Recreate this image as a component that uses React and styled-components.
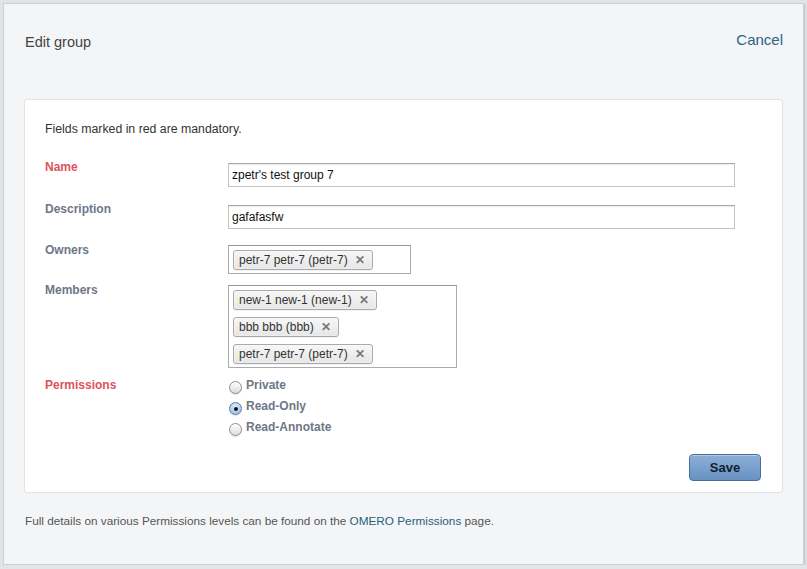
import styled, { createGlobalStyle } from "styled-components";

const GlobalStyle = createGlobalStyle`
    body {
        margin: 0;
        background: #e3e4e7;
        font-family: "Liberation Sans", Arial, sans-serif;
    }
`;

const Panel = styled.div`
    margin: 3px 0 0 3px;
    width: 801px;
    height: 562px;
    box-sizing: border-box;
    background: #f4f5f7;
    border: 1px solid #cfd0d3;
    box-shadow: 1px 1px 2px rgba(0, 0, 0, 0.15);
    padding: 0 20px;
`;

const Header = styled.div`
    display: flex;
    justify-content: space-between;
    align-items: flex-start;
    height: 95px;
    padding-left: 1px;
`;

const Title = styled.h1`
    margin: 29px 0 0;
    font-size: 14.5px;
    font-weight: normal;
    line-height: 18px;
    color: #444;
`;

const Cancel = styled.a`
    margin: 27px 0 0;
    font-size: 15px;
    line-height: 18px;
    color: #2b6584;
    text-decoration: none;
    cursor: pointer;
`;

const Card = styled.div`
    background: #fff;
    border: 1px solid #e1e2e5;
    border-radius: 3px;
    padding: 20px 21px 11px 20px;
    display: flex;
    flex-direction: column;
`;

const Note = styled.p`
    margin: 0;
    font-size: 12.3px;
    line-height: 18px;
    color: #333;
`;

const Row = styled.div`
    display: flex;
    align-items: flex-start;
    margin-top: ${(p) => p.$gap}px;
`;

const Label = styled.label`
    width: 183px;
    flex: none;
    font-size: 12px;
    font-weight: bold;
    line-height: 18px;
    color: ${(p) => (p.$required ? "#e0525c" : "#6e7787")};
`;

const TextInput = styled.input`
    margin-top: 5px;
    width: ${(p) => p.$width}px;
    height: 24px;
    box-sizing: border-box;
    border: 1px solid #c4c4c4;
    border-top-color: #a9a9a9;
    box-shadow: inset 0 1px 1px rgba(0, 0, 0, 0.08);
    padding: 0 3px;
    font-family: "Liberation Sans", Arial, sans-serif;
    font-size: 12px;
    color: #111;
    outline: none;
`;

const TagBox = styled.div`
    margin-top: 4px;
    width: ${(p) => p.$width}px;
    box-sizing: border-box;
    border: 1px solid #aaa;
    border-top-color: #999;
    background: #fff;
    padding: 4px 4px 3px;
    display: flex;
    flex-wrap: wrap;
    align-content: flex-start;
    gap: 7px 4px;
`;

const Tag = styled.span`
    display: inline-flex;
    align-items: center;
    height: 20px;
    box-sizing: border-box;
    padding: 0 7px 0 5px;
    border: 1px solid #aaa;
    border-radius: 3px;
    background: linear-gradient(#f7f7f7, #e6e6e6);
    box-shadow: 0 0 2px #fff inset, 0 1px 0 rgba(0, 0, 0, 0.05);
    font-size: 12px;
    color: #333;
    white-space: nowrap;
`;

const Remove = styled.span`
    margin-left: 7px;
    font-size: 12px;
    font-weight: bold;
    color: #777;
`;

const RadioList = styled.div`
    display: flex;
    flex-direction: column;
`;

const RadioRow = styled.label`
    display: flex;
    align-items: flex-start;
    height: 21px;
    font-size: 12px;
    font-weight: bold;
    line-height: 18px;
    color: #6e7787;
`;

const RadioDot = styled.span`
    position: relative;
    margin: 5px 4px 0 1px;
    width: 13px;
    height: 13px;
    box-sizing: border-box;
    border-radius: 50%;
    border: 1px solid ${(p) => (p.$checked ? "#5a7fb0" : "#8e8e8e")};
    background: ${(p) =>
        p.$checked
            ? "radial-gradient(circle at 50% 35%, #e6f0fb, #8fb3e0)"
            : "linear-gradient(#ffffff, #dcdcdc)"};
    box-shadow: 0 1px 1px rgba(0, 0, 0, 0.12);

    &::after {
        content: "";
        display: ${(p) => (p.$checked ? "block" : "none")};
        position: absolute;
        left: 3.5px;
        top: 3.5px;
        width: 4px;
        height: 4px;
        border-radius: 50%;
        background: #111;
    }
`;

const Actions = styled.div`
    display: flex;
    justify-content: flex-end;
    margin-top: 15px;
`;

const SaveButton = styled.button`
    width: 72px;
    height: 27px;
    border: 1px solid #46709f;
    border-radius: 4px;
    background: linear-gradient(#8cafd7, #6892c3);
    box-shadow: inset 0 1px 0 rgba(255, 255, 255, 0.35);
    font-family: "Liberation Sans", Arial, sans-serif;
    font-size: 13px;
    font-weight: bold;
    color: #14202e;
    cursor: pointer;
`;

const Footer = styled.p`
    margin: 19px 0 0 1px;
    font-size: 11.75px;
    line-height: 18px;
    color: #555;
`;

const Link = styled.a`
    color: #1f5f80;
    text-decoration: none;
`;

const members = ["new-1 new-1 (new-1)", "bbb bbb (bbb)", "petr-7 petr-7 (petr-7)"];
const permissions = [
    { text: "Private", checked: false },
    { text: "Read-Only", checked: true },
    { text: "Read-Annotate", checked: false },
];

function App() {
    return (
        <>
            <GlobalStyle />
            <Panel>
                <Header>
                    <Title>Edit group</Title>
                    <Cancel>Cancel</Cancel>
                </Header>
                <Card>
                    <Note>Fields marked in red are mandatory.</Note>
                    <Row $gap={20}>
                        <Label $required>Name</Label>
                        <TextInput $width={507} defaultValue="zpetr's test group 7" />
                    </Row>
                    <Row $gap={13}>
                        <Label>Description</Label>
                        <TextInput $width={507} defaultValue="gafafasfw" />
                    </Row>
                    <Row $gap={12}>
                        <Label>Owners</Label>
                        <TagBox $width={183}>
                            <Tag>
                                petr-7 petr-7 (petr-7)<Remove>✕</Remove>
                            </Tag>
                        </TagBox>
                    </Row>
                    <Row $gap={7}>
                        <Label>Members</Label>
                        <TagBox $width={229}>
                            {members.map((m) => (
                                <Tag key={m}>
                                    {m}
                                    <Remove>✕</Remove>
                                </Tag>
                            ))}
                        </TagBox>
                    </Row>
                    <Row $gap={8}>
                        <Label $required>Permissions</Label>
                        <RadioList>
                            {permissions.map((p) => (
                                <RadioRow key={p.text}>
                                    <RadioDot $checked={p.checked} />
                                    {p.text}
                                </RadioRow>
                            ))}
                        </RadioList>
                    </Row>
                    <Actions>
                        <SaveButton>Save</SaveButton>
                    </Actions>
                </Card>
                <Footer>
                    Full details on various Permissions levels can be found on the{" "}
                    <Link>OMERO Permissions</Link> page.
                </Footer>
            </Panel>
        </>
    );
}

export default App;
